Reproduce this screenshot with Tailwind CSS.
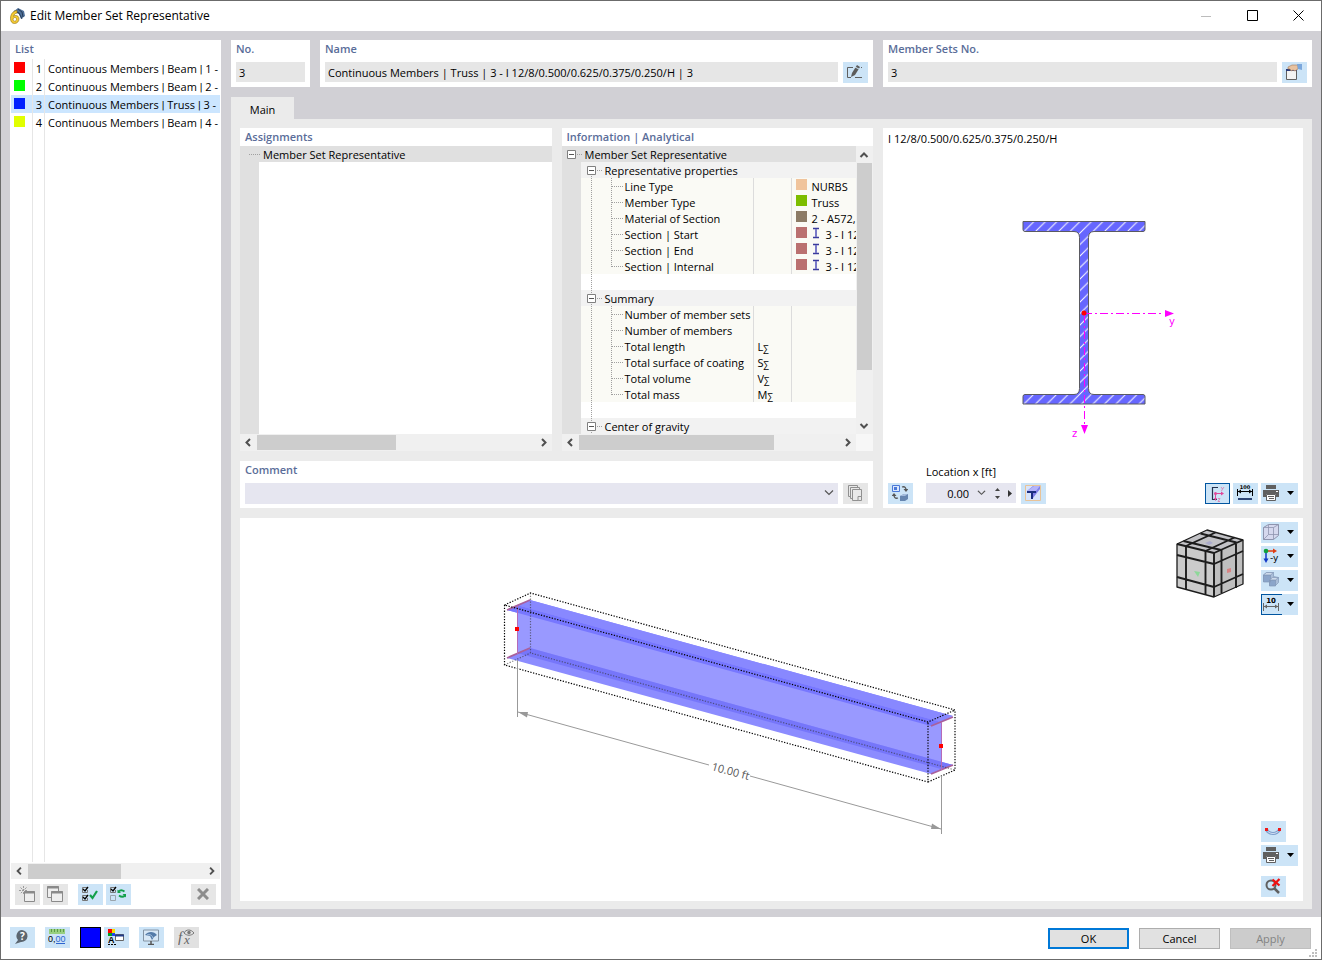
<!DOCTYPE html>
<html lang="en">
<head>
    <meta charset="UTF-8">
    <meta name="viewport" content="width=device-width, initial-scale=1.0">
    <title>Edit Member Set Representative</title>
    <script src="https://cdn.jsdelivr.net/npm/@tailwindcss/browser@4"></script>
</head>
<body class="font-['Open_Sans','Noto_Sans',sans-serif] text-[11px] leading-4 text-black">

    <!-- Shared icons -->
    <svg class="hidden">
        <symbol id="left" viewBox="0 0 17 17"><path d="M10 5 6.500 8.500 10 12" fill="none" stroke="#505050" stroke-width="2"/></symbol>
        <symbol id="right" viewBox="0 0 17 17"><path d="M7 5 10.500 8.500 7 12" fill="none" stroke="#505050" stroke-width="2"/></symbol>
        <symbol id="up" viewBox="0 0 17 17"><path d="M3.500 11 7 7.500 10.500 11" fill="none" stroke="#505050" stroke-width="2"/></symbol>
        <symbol id="down" viewBox="0 0 17 17"><path d="M3.500 7 7 10.500 10.500 7" fill="none" stroke="#505050" stroke-width="2"/></symbol>
        <symbol id="caret" viewBox="0 0 7 4"><path d="M0 0h7L3.500 4z"/></symbol>
        <symbol id="combo" viewBox="0 0 10 6"><path d="M1 .5 5 4.500 9 .5" fill="none" stroke="#555" stroke-width="1.200"/></symbol>
        <symbol id="root" viewBox="0 0 19 16"><path d="M11 8.500h6" stroke="#a0a0a0" stroke-dasharray="1 1"/><path d="M1.500 4.500h8v8h-8z" fill="#fff" stroke="#808080"/><path d="M3 8.500h5" stroke="#555"/></symbol>
        <symbol id="group" viewBox="0 0 24 16"><path d="M10.500 0v16M16 8.500h5" stroke="#a0a0a0" stroke-dasharray="1 1"/><path d="M6.500 4.500h8v8h-8z" fill="#fff" stroke="#808080"/><path d="M8 8.500h5" stroke="#555"/></symbol>
        <symbol id="group-first" viewBox="0 0 24 16"><path d="M10.500 12v4M16 8.500h5" stroke="#a0a0a0" stroke-dasharray="1 1"/><path d="M6.500 4.500h8v8h-8z" fill="#fff" stroke="#808080"/><path d="M8 8.500h5" stroke="#555"/></symbol>
        <symbol id="leaf" viewBox="0 0 44 16"><path d="M10.500 0v16M30.500 0v16M31 8.500h11" stroke="#a0a0a0" stroke-dasharray="1 1"/></symbol>
        <symbol id="leaf-last" viewBox="0 0 44 16"><path d="M10.500 0v16M30.500 0v9M31 8.500h11" stroke="#a0a0a0" stroke-dasharray="1 1"/></symbol>
        <symbol id="trunk" viewBox="0 0 44 16"><path d="M10.500 0v16" stroke="#a0a0a0" stroke-dasharray="1 1"/></symbol>
        <symbol id="beam" viewBox="0 0 8 12"><path d="M1 1.500h6M1 10.500h6" stroke="#3a3a9c" stroke-width="1.500"/><path d="M4 2v8" stroke="#7a7ac8" stroke-width="2"/></symbol>
        <symbol id="printer" viewBox="0 0 16 16"><path d="M3 0h10v4H3zM0 5h16v7h-3v-3H3v3H0z" fill="#606060"/><path d="M3.500 9.500h9v6h-9z" fill="#fff" stroke="#606060"/><path d="M5 11.500h6M6 13.500h5" stroke="#606060"/><path d="M13 6.500h2" stroke="#fff"/></symbol>
    </svg>

    <div class="flex min-h-screen flex-col border border-[#6b6b6b] bg-white">

        <!-- Title bar -->
        <header class="flex h-[30px] items-center pl-2">
            <svg class="h-4 w-4" viewBox="0 0 16 16">
                <path d="M4 4 9 0l6 3 1 5-4 3-2-5-5-2z" fill="#4f7099"/><path d="M5 3l5 2 3 6M9 1l4 3 1 5" fill="none" stroke="#263c58"/>
                <path d="M8 2.500C4 3 1.500 6 1.500 10.500c0 3 1.500 5 4 5s4.500-2 4.500-4.500S8.500 7.500 6.500 7.500c-1 0-1.500.3-2 .8C5 6.500 6 5.500 8 5zM5.800 9.500c1 0 1.700.7 1.700 1.700s-.7 2-1.700 2-1.700-.8-1.700-1.800.7-1.900 1.700-1.900z" fill="#f5cb32" stroke="#8a6c17" stroke-width=".6"/>
            </svg>
            <h1 class="ml-[5px] flex-1 text-xs">Edit Member Set Representative</h1>
            <button aria-label="Minimize" class="flex h-full w-[46px] items-center justify-center"><svg class="h-[11px] w-[11px]" viewBox="0 0 11 11"><path d="M0 5.500h10" stroke="#bcbcbc"/></svg></button>
            <button aria-label="Maximize" class="flex h-full w-[46px] items-center justify-center pb-px"><svg class="h-[11px] w-[11px]" viewBox="0 0 11 11"><path d="M.5.5h10v10H.5z" fill="none" stroke="#000"/></svg></button>
            <button aria-label="Close" class="flex h-full w-[46px] items-center justify-center pb-px"><svg class="h-[11px] w-[11px]" viewBox="0 0 11 11"><path d="m.5.5 10 10m0-10-10 10" stroke="#000"/></svg></button>
        </header>

        <main class="flex flex-1 gap-[10px] bg-[#d1d0d5] px-[9px] pt-[9px] pb-2">

            <!-- List of representatives -->
            <aside class="flex w-[211px] shrink-0 flex-col bg-white px-px">
                <h2 class="h-[19px] pt-px pl-1 font-semibold text-[#5a6d99]">List</h2>
                <table class="w-full table-fixed border-separate border-spacing-0 whitespace-nowrap">
                    <colgroup><col class="w-[22px]"><col class="w-3"><col></colgroup>
                    <tbody>
                        <tr class="h-[18px]"><td class="border-r border-[#e6e6e6] p-0 pl-[3px]"><div class="mt-[3px] mb-1 h-[11px] w-[11px] bg-[#ff0000]"></div></td><td class="border-r border-[#e6e6e6] p-0 pt-[2px] pr-[2px] text-right">1</td><td class="p-0 pt-[2px] pl-[3px]">Continuous Members <span class="font-[Roboto] leading-none">|</span> Beam <span class="font-[Roboto] leading-none">|</span> 1 -</td></tr>
                        <tr class="h-[18px]"><td class="border-r border-[#e6e6e6] p-0 pl-[3px]"><div class="mt-[3px] mb-1 h-[11px] w-[11px] bg-[#00ff00]"></div></td><td class="border-r border-[#e6e6e6] p-0 pt-[2px] pr-[2px] text-right">2</td><td class="p-0 pt-[2px] pl-[3px]">Continuous Members <span class="font-[Roboto] leading-none">|</span> Beam <span class="font-[Roboto] leading-none">|</span> 2 -</td></tr>
                        <tr class="h-[18px] bg-[#cce6ff]"><td class="border-r border-[#e6e6e6] p-0 pl-[3px]"><div class="mt-[3px] mb-1 h-[11px] w-[11px] bg-[#0021ff]"></div></td><td class="border-r border-[#e6e6e6] p-0 pt-[2px] pr-[2px] text-right">3</td><td class="p-0 pt-[2px] pl-[3px]">Continuous Members <span class="font-[Roboto] leading-none">|</span> Truss <span class="font-[Roboto] leading-none">|</span> 3 -</td></tr>
                        <tr class="h-[18px]"><td class="border-r border-[#e6e6e6] p-0 pl-[3px]"><div class="mt-[3px] mb-1 h-[11px] w-[11px] bg-[#e1ff00]"></div></td><td class="border-r border-[#e6e6e6] p-0 pt-[2px] pr-[2px] text-right">4</td><td class="p-0 pt-[2px] pl-[3px]">Continuous Members <span class="font-[Roboto] leading-none">|</span> Beam <span class="font-[Roboto] leading-none">|</span> 4 -</td></tr>
                    </tbody>
                </table>
                <div class="flex flex-1"><div class="w-[22px] border-r border-[#e6e6e6]"></div><div class="w-3 border-r border-[#e6e6e6]"></div></div>
                <div class="mt-px flex h-4 items-center bg-[#f0f0f0]">
                    <button aria-label="Scroll left"><svg class="h-4 w-[17px]"><use href="#left"/></svg></button>
                    <div class="flex-1"><div class="h-[15px] w-[93px] bg-[#cdcdcd]"></div></div>
                    <button aria-label="Scroll right"><svg class="h-4 w-[17px]"><use href="#right"/></svg></button>
                </div>
                <div class="flex gap-[3px] px-1 pt-[5px] pb-1">
                    <button aria-label="New" class="flex h-[21px] w-[25px] items-center justify-center bg-[#e6e6e6] pr-px pb-px">
                        <svg class="h-4 w-4" viewBox="0 0 16 16"><path d="M4.500 0v9M0 4.500h9M1.500 1.500l6 6M7.500 1.500l-6 6" stroke="#999" stroke-dasharray="2 1"/><path d="M5.500 5.500h10v10h-10z" fill="#eee" stroke="#8a8a8a"/><path d="M5 6.500h11" stroke="#8a8a8a" stroke-width="2"/></svg>
                    </button>
                    <button aria-label="Copy" class="flex h-[21px] w-[25px] items-center justify-center bg-[#e6e6e6] pr-px pb-px">
                        <svg class="h-4 w-4" viewBox="0 0 16 16" fill="#eee" stroke="#8a8a8a"><path d="M.5.5h11v11H.5z"/><path d="M0 1.500h12" stroke-width="2"/><path d="M4.500 5.500h11v10h-11z"/><path d="M4 6.500h12" stroke-width="2"/></svg>
                    </button>
                    <button aria-label="Select all" class="ml-[7px] flex h-[21px] w-[25px] items-center justify-center bg-[#cce4f7] pr-px pb-px">
                        <svg class="h-4 w-4" viewBox="0 0 16 16" fill="none"><path d="M5 1.500H.5v5h5V4M5 9.500H.5v5h5V12" stroke="#777"/><path d="m1 3 2 2 3-4M1 11l2 2 3-4" stroke="#000" stroke-width="1.300"/><path d="m8 9 2.500 3L15 5" stroke="#12a04a" stroke-width="2.200"/></svg>
                    </button>
                    <button aria-label="Invert selection" class="flex h-[21px] w-[25px] items-center justify-center bg-[#cce4f7] pr-px pb-px">
                        <svg class="h-4 w-4" viewBox="0 0 16 16" fill="none"><path d="M5 1.500H.5v5h5V4" stroke="#777"/><path d="M.5 9.500h5v5h-5z" stroke="#9aa4ac"/><path d="m1 3 2 2 3-4" stroke="#000" stroke-width="1.300"/><path d="M8.500 5.500c2-2 4-1.500 6 0M15 9.500c-2 2-4 1.500-6 0" stroke="#12a04a" stroke-width="1.800"/><path d="M7.500 3.500V7H11zM16 11.500V8h-3.500z" fill="#12a04a"/></svg>
                    </button>
                    <button aria-label="Delete" class="ml-auto flex h-[21px] w-[25px] items-center justify-center bg-[#e6e6e6] pr-px pb-px">
                        <svg class="h-3 w-3" viewBox="0 0 12 12"><path d="m1 1 10 10M11 1 1 11" stroke="#8c8c8c" stroke-width="3"/></svg>
                    </button>
                </div>
            </aside>

            <div class="flex min-w-0 flex-1 flex-col">

                <!-- Header fields -->
                <div class="flex gap-[10px]">
                    <div class="w-[79px] shrink-0 bg-white px-[5px] pb-[5px]">
                        <label for="no" class="block h-[22px] pt-px font-semibold text-[#5a6d99]">No.</label>
                        <input id="no" value="3" readonly class="block h-5 w-full bg-[#e6e6e6] px-[3px]">
                    </div>
                    <div class="flex min-w-0 flex-1 items-end gap-[5px] bg-white px-[5px] pb-1">
                        <div class="min-w-0 flex-1">
                            <label for="name" class="block h-[22px] pt-px font-semibold text-[#5a6d99]">Name</label>
                            <input id="name" value="Continuous Members | Truss | 3 - I 12/8/0.500/0.625/0.375/0.250/H | 3" readonly class="mb-px block h-5 w-full bg-[#e6e6e6] px-[3px]">
                        </div>
                        <button aria-label="Edit name" class="flex h-[21px] w-[25px] items-center justify-center bg-[#cce4f7] pr-px pb-px">
                            <svg class="h-4 w-4" viewBox="0 0 16 16"><path d="M6 3.500H.5v10H4M8 13.500h7M14 3.500h1" fill="none" stroke="#606060"/><path d="m4 13 1-4 5-8 3 2-5 8z" fill="#5c5c5c"/><path d="m8 3 4 2" stroke="#cce4f7"/></svg>
                        </button>
                    </div>
                    <div class="flex w-[429px] shrink-0 items-end gap-[5px] bg-white px-[5px] pb-1">
                        <div class="flex-1">
                            <label for="sets" class="block h-[22px] pt-px font-semibold text-[#5a6d99]">Member Sets No.</label>
                            <input id="sets" value="3" readonly class="mb-px block h-5 w-full bg-[#e6e6e6] px-[3px]">
                        </div>
                        <button aria-label="Pick member sets" class="flex h-[21px] w-[25px] items-center justify-center bg-[#cce4f7] pr-px pb-px">
                            <svg class="h-4 w-4" viewBox="0 0 16 16"><path d="M.5 5.500h10v10H.5z" fill="#f3f3f3" stroke="#606060"/><path d="M0 6h11" stroke="#2b3a78" stroke-width="2"/><path d="M2 3l4-2h6v4L9 7 7 6 5 7 4 5H2z" fill="#e8c2a0" stroke="#a07b5c" stroke-width=".6"/><path d="M11 0h5v6l-4-1z" fill="#7ba7dc"/></svg>
                        </button>
                    </div>
                </div>

                <nav class="mt-[10px] flex">
                    <button class="h-[22px] w-[63px] bg-[#ebebeb] pt-1">Main</button>
                </nav>

                <div class="flex flex-1 flex-col gap-[10px] bg-[#ebebeb] px-[9px] pt-[9px] pb-2">
                    <div class="flex h-[380px] gap-[10px]">
                        <div class="flex min-w-0 flex-1 flex-col gap-[10px]">
                            <div class="flex min-h-0 flex-1 gap-[10px]">

                                <!-- Assignments -->
                                <section class="flex min-w-0 flex-1 flex-col bg-white">
                                    <h2 class="h-[18px] pt-px pl-[5px] font-semibold text-[#5a6d99]">Assignments</h2>
                                    <div class="flex h-4 items-center bg-[#e0e0e0]">
                                        <span class="ml-[9px] w-[11px] border-t border-dotted border-[#a0a0a0]"></span>
                                        <span class="ml-[3px] pt-[2px]">Member Set Representative</span>
                                    </div>
                                    <div class="w-[19px] flex-1 bg-[#e0e0e0]"></div>
                                    <div class="flex h-[17px] items-center bg-[#f0f0f0]">
                                        <button aria-label="Scroll left"><svg class="h-[17px] w-[17px]"><use href="#left"/></svg></button>
                                        <div class="flex-1"><div class="h-[15px] w-[139px] bg-[#cdcdcd]"></div></div>
                                        <button aria-label="Scroll right"><svg class="h-[17px] w-[17px]"><use href="#right"/></svg></button>
                                    </div>
                                </section>

                                <!-- Information -->
                                <section class="flex min-w-0 flex-1 flex-col bg-white">
                                    <h2 class="h-[18px] pt-px pl-[5px] font-semibold text-[#5a6d99]">Information | Analytical</h2>
                                    <div class="flex h-72">
                                        <div class="min-w-0 flex-1 overflow-hidden">
                                            <table class="w-full table-fixed border-separate border-spacing-0 leading-[15px] whitespace-nowrap">
                                                <colgroup><col class="w-[19px]"><col class="w-11"><col class="w-32"><col class="w-[39px]"><col></colgroup>
                                                <tbody>
                                                    <tr class="h-4 bg-[#e0e0e0]"><td colspan="5" class="p-0"><div class="flex pl-1"><svg class="h-4 w-[19px]"><use href="#root"/></svg><span class="pt-px">Member Set Representative</span></div></td></tr>
                                                    <tr class="h-4 bg-[#f2f2f2]"><td class="bg-[#e0e0e0] p-0"></td><td colspan="4" class="p-0"><div class="flex"><svg class="h-4 w-6"><use href="#group-first"/></svg><span class="pt-px">Representative properties</span></div></td></tr>
                                                    <tr class="h-4 bg-[#fafaf5]"><td class="bg-[#e0e0e0] p-0"></td><td class="p-0"><svg class="h-4 w-11"><use href="#leaf"/></svg></td><td class="p-0 pt-px">Line Type</td><td class="border-x border-[#dcdcdc] p-0"></td><td class="overflow-hidden p-0 pt-px pl-1"><div class="flex gap-[5px]"><i class="h-[11px] w-[11px] bg-[#f0c49c]"></i>NURBS</div></td></tr>
                                                    <tr class="h-4 bg-[#fafaf5]"><td class="bg-[#e0e0e0] p-0"></td><td class="p-0"><svg class="h-4 w-11"><use href="#leaf"/></svg></td><td class="p-0 pt-px">Member Type</td><td class="border-x border-[#dcdcdc] p-0"></td><td class="overflow-hidden p-0 pt-px pl-1"><div class="flex gap-[5px]"><i class="h-[11px] w-[11px] bg-[#7dbd00]"></i>Truss</div></td></tr>
                                                    <tr class="h-4 bg-[#fafaf5]"><td class="bg-[#e0e0e0] p-0"></td><td class="p-0"><svg class="h-4 w-11"><use href="#leaf"/></svg></td><td class="p-0 pt-px">Material of Section</td><td class="border-x border-[#dcdcdc] p-0"></td><td class="overflow-hidden p-0 pt-px pl-1"><div class="flex gap-[5px]"><i class="h-[11px] w-[11px] shrink-0 bg-[#8c7b66]"></i>2 - A572,</div></td></tr>
                                                    <tr class="h-4 bg-[#fafaf5]"><td class="bg-[#e0e0e0] p-0"></td><td class="p-0"><svg class="h-4 w-11"><use href="#leaf"/></svg></td><td class="p-0 pt-px">Section | Start</td><td class="border-x border-[#dcdcdc] p-0"></td><td class="overflow-hidden p-0 pt-px pl-1"><div class="flex gap-[5px]"><i class="h-[11px] w-[11px] shrink-0 bg-[#ba7070]"></i><svg class="mr-px h-3 w-2 shrink-0"><use href="#beam"/></svg>3 - I 12</div></td></tr>
                                                    <tr class="h-4 bg-[#fafaf5]"><td class="bg-[#e0e0e0] p-0"></td><td class="p-0"><svg class="h-4 w-11"><use href="#leaf"/></svg></td><td class="p-0 pt-px">Section | End</td><td class="border-x border-[#dcdcdc] p-0"></td><td class="overflow-hidden p-0 pt-px pl-1"><div class="flex gap-[5px]"><i class="h-[11px] w-[11px] shrink-0 bg-[#ba7070]"></i><svg class="mr-px h-3 w-2 shrink-0"><use href="#beam"/></svg>3 - I 12</div></td></tr>
                                                    <tr class="h-4 bg-[#fafaf5]"><td class="bg-[#e0e0e0] p-0"></td><td class="p-0"><svg class="h-4 w-11"><use href="#leaf-last"/></svg></td><td class="p-0 pt-px">Section | Internal</td><td class="border-x border-[#dcdcdc] p-0"></td><td class="overflow-hidden p-0 pt-px pl-1"><div class="flex gap-[5px]"><i class="h-[11px] w-[11px] shrink-0 bg-[#ba7070]"></i><svg class="mr-px h-3 w-2 shrink-0"><use href="#beam"/></svg>3 - I 12</div></td></tr>
                                                    <tr class="h-4"><td class="bg-[#e0e0e0] p-0"></td><td colspan="4" class="p-0"><svg class="h-4 w-11"><use href="#trunk"/></svg></td></tr>
                                                    <tr class="h-4 bg-[#f2f2f2]"><td class="bg-[#e0e0e0] p-0"></td><td colspan="4" class="p-0"><div class="flex"><svg class="h-4 w-6"><use href="#group"/></svg><span class="pt-px">Summary</span></div></td></tr>
                                                    <tr class="h-4 bg-[#fafaf5]"><td class="bg-[#e0e0e0] p-0"></td><td class="p-0"><svg class="h-4 w-11"><use href="#leaf"/></svg></td><td class="p-0 pt-px">Number of member sets</td><td class="border-x border-[#dcdcdc] p-0"></td><td class="p-0"></td></tr>
                                                    <tr class="h-4 bg-[#fafaf5]"><td class="bg-[#e0e0e0] p-0"></td><td class="p-0"><svg class="h-4 w-11"><use href="#leaf"/></svg></td><td class="p-0 pt-px">Number of members</td><td class="border-x border-[#dcdcdc] p-0"></td><td class="p-0"></td></tr>
                                                    <tr class="h-4 bg-[#fafaf5]"><td class="bg-[#e0e0e0] p-0"></td><td class="p-0"><svg class="h-4 w-11"><use href="#leaf"/></svg></td><td class="p-0 pt-px">Total length</td><td class="border-x border-[#dcdcdc] p-0 pt-px pl-1"><div class="flex h-[15px]">L<span class="pt-[2px] text-[9px]">∑</span></div></td><td class="p-0"></td></tr>
                                                    <tr class="h-4 bg-[#fafaf5]"><td class="bg-[#e0e0e0] p-0"></td><td class="p-0"><svg class="h-4 w-11"><use href="#leaf"/></svg></td><td class="p-0 pt-px">Total surface of coating</td><td class="border-x border-[#dcdcdc] p-0 pt-px pl-1"><div class="flex h-[15px]">S<span class="pt-[2px] text-[9px]">∑</span></div></td><td class="p-0"></td></tr>
                                                    <tr class="h-4 bg-[#fafaf5]"><td class="bg-[#e0e0e0] p-0"></td><td class="p-0"><svg class="h-4 w-11"><use href="#leaf"/></svg></td><td class="p-0 pt-px">Total volume</td><td class="border-x border-[#dcdcdc] p-0 pt-px pl-1"><div class="flex h-[15px]">V<span class="pt-[2px] text-[9px]">∑</span></div></td><td class="p-0"></td></tr>
                                                    <tr class="h-4 bg-[#fafaf5]"><td class="bg-[#e0e0e0] p-0"></td><td class="p-0"><svg class="h-4 w-11"><use href="#leaf-last"/></svg></td><td class="p-0 pt-px">Total mass</td><td class="border-x border-[#dcdcdc] p-0 pt-px pl-1"><div class="flex h-[15px]">M<span class="pt-[2px] text-[9px]">∑</span></div></td><td class="p-0"></td></tr>
                                                    <tr class="h-4"><td class="bg-[#e0e0e0] p-0"></td><td colspan="4" class="p-0"><svg class="h-4 w-11"><use href="#trunk"/></svg></td></tr>
                                                    <tr class="h-4 bg-[#f2f2f2]"><td class="bg-[#e0e0e0] p-0"></td><td colspan="4" class="p-0"><div class="flex"><svg class="h-4 w-6"><use href="#group"/></svg><span class="pt-px">Center of gravity</span></div></td></tr>
                                                </tbody>
                                            </table>
                                        </div>
                                        <div class="flex w-[17px] flex-col bg-[#f0f0f0] px-px">
                                            <button aria-label="Scroll up"><svg class="h-[17px] w-[15px]" viewBox="0 0 15 17"><use href="#up" width="17" height="17"/></svg></button>
                                            <div class="flex-1"><div class="h-[207px] bg-[#cdcdcd]"></div></div>
                                            <button aria-label="Scroll down"><svg class="h-[17px] w-[15px]" viewBox="0 0 15 17"><use href="#down" width="17" height="17"/></svg></button>
                                        </div>
                                    </div>
                                    <div class="flex h-[17px] items-center bg-[#f0f0f0]">
                                        <button aria-label="Scroll left"><svg class="h-[17px] w-[17px]"><use href="#left"/></svg></button>
                                        <div class="flex-1"><div class="h-[15px] w-[195px] bg-[#cdcdcd]"></div></div>
                                        <button aria-label="Scroll right"><svg class="h-[17px] w-[17px]"><use href="#right"/></svg></button>
                                        <div class="h-full w-[17px] bg-[#f7f7f7]"></div>
                                    </div>
                                </section>
                            </div>

                            <!-- Comment -->
                            <section class="flex items-end gap-[5px] bg-white px-[5px] pb-1">
                                <div class="relative flex-1">
                                    <label for="comment" class="block h-[22px] pt-px font-semibold text-[#5a6d99]">Comment</label>
                                    <select id="comment" class="block h-[21px] w-full appearance-none bg-[#e6e6f0]"><option></option></select>
                                    <svg class="pointer-events-none absolute right-1 bottom-2 h-[6px] w-[10px]"><use href="#combo"/></svg>
                                </div>
                                <button aria-label="Comment templates" class="flex h-[21px] w-[25px] items-center justify-center bg-[#e6e6e6] pr-px pb-px">
                                    <svg class="h-4 w-4" viewBox="0 0 16 16" fill="#e9e9e9" stroke="#909090"><path d="M1.500.5h9v11h-9z"/><path d="M3.500 2.500h9v11h-9z"/><path d="M5.500 4.500h9v11h-9z"/><path d="M11 15.500v-4h3.500"/></svg>
                                </button>
                            </section>
                        </div>

                        <!-- Section preview -->
                        <section class="flex w-[420px] shrink-0 flex-col bg-white px-[5px] pt-[3px] pb-1">
                            <p>I 12/8/0.500/0.625/0.375/0.250/H</p>
                            <svg class="min-h-0 w-full flex-1" viewBox="888 147 410 317">
                                <defs>
                                    <pattern id="hatch" width="11.500" height="11.500" patternUnits="userSpaceOnUse" patternTransform="translate(0 2)">
                                        <rect width="12" height="12" fill="#6666ff"/>
                                        <path d="M-1 12.500 12.500-1M-2 2 2-2M9.500 13.500l4-4" stroke="#fff"/>
                                    </pattern>
                                </defs>
                                <path d="M1023 221.500h122v8q0 2-2 2h-49q-5.500 0-5.500 6v151q0 6 5.500 6h49q2 0 2 2v7.500h-122v-7.500q0-2 2-2h49q5.500 0 5.500-6v-151q0-6-5.500-6h-49q-2 0-2-2z" fill="url(#hatch)" stroke="#5a5a62"/>
                                <path d="M1084 313.500h80" stroke="#f0f" stroke-dasharray="8 3 2 3"/>
                                <path d="M1084.500 315v110" stroke="#f0f" stroke-dasharray="8 3 2 3"/>
                                <path d="M1165 310v7l9-3.500zM1081 425h7l-3.500 9z" fill="#f0f"/>
                                <circle cx="1084" cy="313" r="2.500" fill="#f00"/>
                                <text x="1169" y="325" fill="#f0f" font-family="DejaVu Sans, sans-serif" font-size="10">y</text>
                                <text x="1072" y="437" fill="#f0f" font-family="DejaVu Sans, sans-serif" font-size="10">z</text>
                            </svg>
                            <div class="flex items-end">
                                <button aria-label="Swap view" class="flex h-[21px] w-[25px] items-center justify-center bg-[#cce4f7] pr-px pb-px">
                                    <svg class="h-4 w-4" viewBox="0 0 16 16"><path d="M.5.5h7v6h-7z" fill="#dbe8fb" stroke="#4a78d8"/><path d="M2 2h3v3H2z" fill="#4a78d8"/><path d="M10 2c3-1 4 1 4 3M6 13c-3 1-4-1-4-3" fill="none" stroke="#555" stroke-width="1.300"/><path d="M11.500 4h5L14 7zM-.5 11h5L2 8z" fill="#555"/><path d="m8 11 4-2h4v5l-3 2H8z" fill="#6686b0"/><path d="m8 11 4-2h4l-3 2z" fill="#a4bcdc"/></svg>
                                </button>
                                <div class="ml-[13px] w-[90px]">
                                    <label for="location" class="block h-[19px] whitespace-nowrap">Location x [ft]</label>
                                    <div class="mb-px flex h-5 items-center bg-[#e6e6f0]">
                                        <input id="location" value="0.00" class="h-5 w-[43px] text-right">
                                        <button aria-label="Open values" class="ml-2"><svg class="h-[6px] w-[9px]" viewBox="0 0 10 6"><use href="#combo"/></svg></button>
                                        <div class="ml-[9px] flex flex-col gap-[5px]">
                                            <button aria-label="Increase"><svg class="h-[3px] w-[5px]" viewBox="0 0 5 3"><path d="M0 3h5L2.500 0z" fill="#444"/></svg></button>
                                            <button aria-label="Decrease"><svg class="h-[3px] w-[5px]" viewBox="0 0 5 3"><path d="M0 0h5L2.500 3z" fill="#444"/></svg></button>
                                        </div>
                                        <button aria-label="Next" class="ml-2"><svg class="h-[7px] w-[4px]" viewBox="0 0 4 7"><path d="M0 0v7l4-3.500z" fill="#333"/></svg></button>
                                    </div>
                                </div>
                                <button aria-label="Section details" class="ml-[5px] flex h-[21px] w-[25px] items-center justify-center bg-[#cce4f7] pr-px pb-px">
                                    <svg class="h-4 w-4" viewBox="0 0 16 16"><path d="M.5.5h15v15H.5z" fill="#d8e4fa" stroke="#e8c398"/><path d="M2 6 8 1h7v3L8 13V7z" fill="#7f7fe8"/><path d="m2 6 7-5h6l-4 5z" fill="#b4b4fa"/><path d="M2 7h9M7 6v8" stroke="#1c2f80" stroke-width="2"/></svg>
                                </button>
                                <div class="ml-auto flex gap-[3px]">
                                    <button aria-label="Show axes" class="flex h-[21px] w-[25px] items-center justify-center border border-[#0055a0] bg-[#cce4f7]">
                                        <svg class="h-4 w-4" viewBox="0 0 16 16"><path d="M8 1.500H2.500v12H7" fill="none" stroke="#23314f" stroke-width="1.200"/><path d="M5 7.500h7M5.500 7v6" stroke="#e0489a"/><circle cx="5.500" cy="7.500" r="1.500" fill="#e0489a"/><path d="M11 5.500v4l3-2zM4 12h3l-1.500 3z" fill="#e0489a"/><path d="m11 1 1.500 2L14 1M12.500 3l-1 2M8 12.500h2l-2 3h2" fill="none" stroke="#d878ac" stroke-width=".8"/></svg>
                                    </button>
                                    <button aria-label="Show dimensions" class="flex h-[21px] w-[25px] items-center justify-center bg-[#cce4f7] pr-px pb-px">
                                        <svg class="h-4 w-4" viewBox="0 0 16 16"><path d="M.5 4v7M15.500 4v7M1 6.500h14" stroke="#000"/><path d="M4 4.500 1 6.500l3 2zM12 4.500l3 2-3 2z"/><path d="M1 14h14" stroke="#2c4474" stroke-width="2"/><text x="8" y="4" text-anchor="middle" font-family="DejaVu Sans, sans-serif" font-weight="700" font-size="5">100</text></svg>
                                    </button>
                                    <button aria-label="Print" class="flex h-[21px] w-[37px] items-center gap-2 bg-[#cce4f7] pb-px pl-[2px]"><svg class="h-4 w-4"><use href="#printer"/></svg><svg class="h-1 w-[7px]"><use href="#caret"/></svg></button>
                                </div>
                            </div>
                        </section>
                    </div>

                    <!-- 3D view -->
                    <section class="flex flex-1 bg-white">
                        <svg class="min-w-0 flex-1" viewBox="240 518 1021 383">
                            <path d="M507 610 530 600 953 716 931 726z" fill="#8888ff"/>
                            <path d="M517 605v48l424 116v-47z" fill="#9999ff"/>
                            <path d="m507 610 10-5 424 117-10 4z" fill="#7777ff"/>
                            <path d="m517 605 13-5 423 116-12 6z" fill="#8888ff"/>
                            <path d="m507 658 23-10 423 117-22 9z" fill="#8c8cff"/>
                            <path d="m517 653 13-5 423 117-12 4z" fill="#7676fa"/>
                            <path d="m507 610 23-10M507 658l23-10M931 726l22-9M931 774l22-9" stroke="#a9609c" stroke-width="1.800"/>
                            <path d="M517.500 606v48M941.500 722v48" stroke="#b56ab8"/>
                            <g fill="none" stroke="#000" stroke-width="1.200" stroke-dasharray="1.300 1.500">
                                <path d="m504.500 605 26-12 424.500 117-27 12zM504.500 605v60L928 782v-60M928 782l27-12v-60"/>
                                <path d="M530.500 593v60L955 770M504.500 665l26-12" stroke="#333" opacity=".6"/>
                            </g>
                            <path d="M515 627h4v4h-4zM939 744h4v4h-4z" fill="#f00"/>
                            <path d="M517.500 660v57M941.500 776v58M518 712l191 53M750 776l191 53" stroke="#999" fill="none"/>
                            <path d="m518 712 10 0-1 5.500zM941 829l-10 0 1-5.500z" fill="#999"/>
                            <text x="711" y="770" transform="rotate(15 711 770)" fill="#555" font-family="Open Sans, sans-serif" font-size="11">10.00 ft</text>
                            <!-- Navigation cube -->
                            <path d="m1177 544 30-14 36 10v44l-29 13-37-10z" fill="#cbcbcb"/>
                            <path d="m1177 544 30-14 36 10-29 13z" fill="#c2c2c6"/>
                            <path d="m1214 553 29-13v44l-29 13z" fill="#bfbfbf"/>
                            <g fill="none" stroke="#1c1c1c" stroke-width="1.900" stroke-linejoin="round">
                                <path d="m1177 544 30-14 36 10v44l-29 13-37-10z" stroke-width="1.300"/>
                                <path d="m1177 544 37 9 29-13M1214 553v44"/>
                                <path d="M1186 546v43.500M1205.500 551v43.500M1177 555l37 9 29-13M1177 577l37 10 29-13M1221.500 549v44M1236 544v44"/>
                                <path d="m1183.500 541 37.500 9M1200.500 533.500l36 9M1186 546l29.500-13.500M1205.500 551l29-13.500"/>
                            </g>
                            <path d="m1194 571 6 1-2 5-2-3z" fill="#8ed89a"/><path d="m1227 569 4-1v4l-4 1z" fill="#d88484"/><path d="m1205 543 5-2 3 2-4 2z" fill="#aaaacb"/>
                        </svg>
                        <div class="flex w-[42px] shrink-0 flex-col items-start gap-[3px] pt-1 pb-1">
                            <button aria-label="View mode" class="flex h-[21px] w-[37px] items-center gap-2 bg-[#cce4f7] pb-px pl-[2px]">
                                <svg class="h-4 w-4" viewBox="0 0 16 16" fill="none" stroke="#8e94ae"><path d="m.5 3.500 5-3h10v11l-5 4H.5z" fill="#d5d8ee"/><path d="M.5 3.500h10v12M10.500 3.500l5-3M5.500.5v10h10M5.500 10.500l-5 5" stroke-width=".8"/></svg>
                                <svg class="h-1 w-[7px]"><use href="#caret"/></svg>
                            </button>
                            <button aria-label="View direction" class="flex h-[21px] w-[37px] items-center gap-2 bg-[#cce4f7] pb-px pl-[2px]">
                                <svg class="h-4 w-4" viewBox="0 0 16 16"><path d="M4 3h7" stroke="#e03c10" stroke-width="1.500"/><path d="M10 .5v5l4-2.500z" fill="#e03c10"/><path d="M3 4v8" stroke="#1238c8" stroke-width="1.500"/><path d="M.5 10.500h5L3 15z" fill="#1238c8"/><circle cx="3" cy="3" r="2.300" fill="#10a040"/><text x="7" y="13" font-family="DejaVu Sans, sans-serif" font-size="9">-y</text></svg>
                                <svg class="h-1 w-[7px]"><use href="#caret"/></svg>
                            </button>
                            <button aria-label="Rendering" class="flex h-[21px] w-[37px] items-center gap-2 bg-[#cce4f7] pb-px pl-[2px]">
                                <svg class="h-4 w-4" viewBox="0 0 16 16" stroke="#8398b8" stroke-width=".7"><path d="m.5 3 3-2.500h7v4l5 1v5l-3 3h-6v-4h-6z" fill="#a9bdd8"/><path d="M.5 3h7v7h-7zM6.500 8h6v6h-6z" fill="#8ba5ca"/><path d="m.5 3 3-2.500h7l-3 2.500zM6.500 8l3-2.500h6l-3 2.500z" fill="#cddaeb"/></svg>
                                <svg class="h-1 w-[7px]"><use href="#caret"/></svg>
                            </button>
                            <button aria-label="Dimensions" class="flex h-[21px] w-[37px] items-center bg-[#cce4f7]">
                                <span class="flex h-full w-[21px] items-center border border-r-0 border-[#0055a0] pl-px"><svg class="h-4 w-4" viewBox="0 0 16 16"><path d="M.5 6v8M15.500 6v8M1 9.500h14" stroke="#666"/><path d="M4 7.500 1 9.500l3 2zM12 7.500l3 2-3 2z" fill="#666"/><text x="8" y="6" text-anchor="middle" font-family="DejaVu Sans, sans-serif" font-weight="700" font-size="7">10</text></svg></span>
                                <svg class="mb-px ml-[5px] h-1 w-[7px]"><use href="#caret"/></svg>
                            </button>
                            <button aria-label="Animate" class="mt-auto flex h-[21px] w-[25px] items-center justify-center bg-[#cce4f7] pr-px pb-px">
                                <svg class="h-4 w-4" viewBox="0 0 16 16" fill="none"><path d="M1 6c3 6 11 6 14 0" stroke="#7e9ecb" stroke-width="3"/><path d="M1 6c3 6 11 6 14 0" stroke="#cfe0f4"/><path d="M0 5h3v3H0zM13 5h3v3h-3z" fill="#f01818"/></svg>
                            </button>
                            <button aria-label="Print view" class="flex h-[21px] w-[37px] items-center gap-2 bg-[#cce4f7] pb-px pl-[2px]"><svg class="h-4 w-4"><use href="#printer"/></svg><svg class="h-1 w-[7px]"><use href="#caret"/></svg></button>
                            <button aria-label="Reset zoom" class="mt-[7px] flex h-[21px] w-[25px] items-center justify-center bg-[#cce4f7] pr-px pb-px">
                                <svg class="h-4 w-4" viewBox="0 0 16 16" fill="none"><circle cx="6" cy="7" r="4.500" stroke="#606060" stroke-width="2"/><path d="m9 10 5 5" stroke="#606060" stroke-width="2.500"/><path d="m7.500 1.500 7 6M14.500 1l-7 7" stroke="#f01010" stroke-width="2.300"/></svg>
                            </button>
                        </div>
                    </section>
                </div>
            </div>
        </main>

        <!-- Footer -->
        <footer class="relative flex h-[42px] items-center gap-[10px] pr-[10px] pb-px pl-[9px]">
            <button aria-label="Help" class="flex h-[21px] w-[25px] items-center justify-center bg-[#cce4f7] pr-px pb-px">
                <svg class="h-4 w-4" viewBox="0 0 16 16"><path d="M8 1a6 6 0 1 1-1 12l-6 2 3-4A6 6 0 0 1 8 1z" fill="#5c6670"/><text x="8.500" y="11" text-anchor="middle" font-family="Open Sans, sans-serif" font-weight="700" font-size="10" fill="#fff">?</text></svg>
            </button>
            <button aria-label="Units" class="flex h-[21px] w-[25px] items-center justify-center bg-[#cce4f7] pr-px pb-px">
                <svg class="h-4 w-[18px]" viewBox="0 0 18 16"><path d="M1 0h16v5H1z" fill="#98d080"/><path d="M3.500 0v3M6.500 0v3M9.500 0v3M12.500 0v3M15.500 0v3" stroke="#5c9c48"/><text x="0" y="13" font-family="Liberation Sans, sans-serif" font-size="9">0,<tspan fill="#2c64d0">00</tspan></text><path d="M8 14.500h9" stroke="#2c64d0"/></svg>
            </button>
            <div class="flex gap-[3px]">
                <button aria-label="Color" class="h-[21px] w-[21px] border border-black bg-[#0000ff]"></button>
                <button aria-label="Display settings" class="flex h-[21px] w-[25px] items-center justify-center bg-[#cce4f7] pr-px pb-px">
                    <svg class="h-4 w-4" viewBox="0 0 16 16"><path d="M0 0h4v4H0z" fill="#f00"/><path d="M4 0h3v4H4z" fill="#f0e000"/><path d="M0 4h4v3H0z" fill="#00a020"/><path d="M4 4h3v3H4z" fill="#2040f0"/><path d="M7.500 5.500h8v6h-8z" fill="#fff" stroke="#666"/><path d="M7 6.500h9" stroke="#223c88" stroke-width="2"/><path d="M0 15.500h8" stroke="#000" stroke-dasharray="2 1"/><text x="0" y="14" font-family="Liberation Sans, sans-serif" font-weight="700" font-size="9">A</text></svg>
                </button>
            </div>
            <button aria-label="Graphics" class="flex h-[21px] w-[25px] items-center justify-center bg-[#cce4f7] pr-px pb-px">
                <svg class="h-4 w-4" viewBox="0 0 16 16"><path d="M.5 1h15v11H.5z" fill="#d8e8f6" stroke="#8494a4"/><path d="M8 12v3M5 15.500h6" stroke="#555" stroke-width="1.500"/><path d="M2 6c3-4 9-4 12 0l-3 2-2 3-2-4z" fill="#547ba8"/><path d="M4 6c3-1 5 0 6 3" fill="none" stroke="#a9c4e2"/></svg>
            </button>
            <button aria-label="Formula" class="flex h-[21px] w-[25px] items-center justify-center bg-[#e1e1e1] pr-px pb-px">
                <svg class="h-4 w-4" viewBox="0 0 16 16"><text x="0" y="13" font-family="Liberation Serif, serif" font-style="italic" font-size="15" fill="#666">f</text><text x="6" y="15" font-family="Liberation Serif, serif" font-style="italic" font-size="13" fill="#666">x</text><path d="M6 4c2-4 7-4 10 0-3 3-7 3-10 0z" fill="none" stroke="#777"/><circle cx="11" cy="3.500" r="1.700" fill="#777"/></svg>
            </button>
            <div class="ml-auto flex gap-[10px] pt-[2px]">
                <button class="h-[21px] w-[81px] border-2 border-[#0078d7] bg-[#e1e1e1]">OK</button>
                <button class="h-[21px] w-[81px] border border-[#adadad] bg-[#e1e1e1]">Cancel</button>
                <button disabled class="h-[21px] w-[81px] border border-[#bfbfbf] bg-[#cccccc] text-[#838383]">Apply</button>
            </div>
            <svg class="absolute right-1 bottom-[2px] h-2 w-2" viewBox="0 0 8 8"><path d="M6 0h2v2H6zM3 3h2v2H3zM6 3h2v2H6zM0 6h2v2H0zM3 6h2v2H3zM6 6h2v2H6z" fill="#bfbfbf"/></svg>
        </footer>
    </div>
</body>
</html>
